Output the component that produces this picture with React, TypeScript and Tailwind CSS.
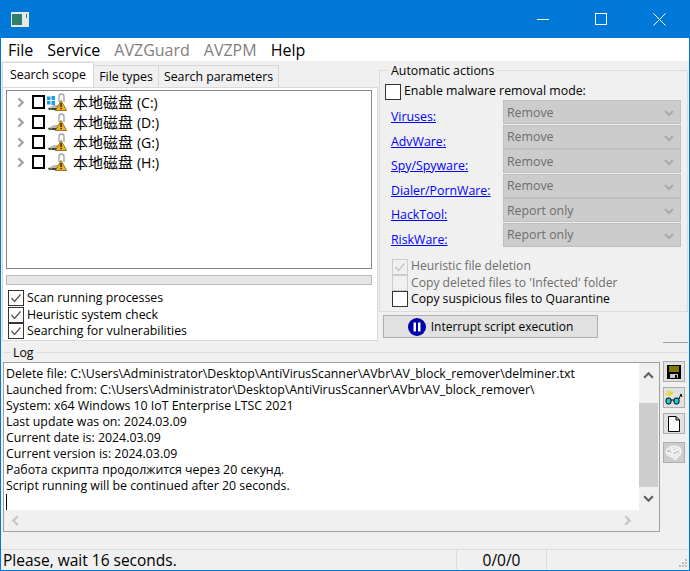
import React from 'react';

const FONT = "font-['Open_Sans','Noto_Sans_CJK_SC',sans-serif]";

const logLines = [
  'Delete file: C:\\Users\\Administrator\\Desktop\\AntiVirusScanner\\AVbr\\AV_block_remover\\delminer.txt',
  'Launched from: C:\\Users\\Administrator\\Desktop\\AntiVirusScanner\\AVbr\\AV_block_remover\\',
  'System: x64 Windows 10 IoT Enterprise LTSC 2021',
  'Last update was on: 2024.03.09',
  'Current date is: 2024.03.09',
  'Current version is: 2024.03.09',
  'Работа скрипта продолжится через 20 секунд.',
  'Script running will be continued after 20 seconds.',
];

const drives = ['C', 'D', 'G', 'H'];

const actions = [
  { label: 'Viruses:', value: 'Remove' },
  { label: 'AdvWare:', value: 'Remove' },
  { label: 'Spy/Spyware:', value: 'Remove' },
  { label: 'Dialer/PornWare:', value: 'Remove' },
  { label: 'HackTool:', value: 'Report only' },
  { label: 'RiskWare:', value: 'Report only' },
];

function Chevron({ dir, color, size = 12 }: { dir: 'up' | 'down' | 'left' | 'right'; color: string; size?: number }) {
  const pts = {
    up: '2,8 6,4 10,8',
    down: '2,4 6,8 10,4',
    left: '8,2 4,6 8,10',
    right: '4,2 8,6 4,10',
  }[dir];
  return (
    <svg width={size} height={size} viewBox="0 0 12 12" className="shrink-0">
      <polyline points={pts} fill="none" stroke={color} strokeWidth="2" />
    </svg>
  );
}

function CheckBox({ checked, disabled }: { checked?: boolean; disabled?: boolean }) {
  return (
    <span
      className={`flex w-4 h-4 shrink-0 items-center justify-center border ${
        disabled ? 'border-[#cccccc] bg-[#f0f0f0]' : 'border-[#333333] bg-white'
      }`}
    >
      {checked && (
        <svg width="12" height="12" viewBox="0 0 12 12">
          <polyline points="1.5,6 4.5,9.5 10.5,2.5" fill="none" stroke={disabled ? '#c4c4c4' : '#555555'} strokeWidth="1.3" />
        </svg>
      )}
    </span>
  );
}

function DriveIcon({ windows }: { windows?: boolean }) {
  return (
    <svg width="20" height="20" viewBox="0 0 20 20" className="shrink-0">
      {windows && (
        <g fill="#1ba1e2">
          <rect x="0" y="4.5" width="3.5" height="3.5" />
          <rect x="4.5" y="4" width="3.5" height="4" />
          <rect x="0" y="9" width="3.5" height="3.5" />
          <rect x="4.5" y="9" width="3.5" height="4" />
        </g>
      )}
      <polygon points="1,16 7,13 11,13 11,16" fill="#b8b8b8" />
      <polygon points="1,16 11,16 11,18 2,18" fill="#404040" />
      <rect x="3" y="16.5" width="2" height="1" fill="#5fcf5f" />
      <path d="M12 10 V4.5 a2.5 2.5 0 0 1 5 0 V10" fill="none" stroke="#a8a8a8" strokeWidth="1.4" />
      <polygon points="14,8.5 19.7,18.5 8.3,18.5" fill="#f2b01e" stroke="#7a5200" strokeWidth="0.7" />
      <rect x="13.4" y="11" width="1.3" height="4" fill="#111111" />
      <rect x="13.4" y="15.8" width="1.3" height="1.4" fill="#111111" />
    </svg>
  );
}

function ToolButton({ children, muted }: { children: React.ReactNode; muted?: boolean }) {
  return (
    <div className={`flex h-[21px] w-[22px] items-center justify-center border border-[#adadad] ${muted ? 'bg-[#cccccc]' : 'bg-[#e1e1e1]'}`}>
      {children}
    </div>
  );
}

function App() {
  return (
    <div className={`${FONT} flex h-[571px] w-[690px] flex-col overflow-hidden border-x border-b border-[#0078d7] bg-[#f0f0f0] text-[12.35px] text-black`}>
      {/* title bar */}
      <div className="flex h-[38px] shrink-0 items-center bg-[#0078d7] pr-[7px]">
        <svg width="18" height="15" viewBox="0 0 18 15" className="ml-[10px]">
          <rect width="18" height="15" fill="#e8e8e8" />
          <rect x="1" y="2" width="10" height="11" fill="#2f7f6f" />
          <rect x="15" y="2" width="1" height="4" fill="#2f7f8f" />
        </svg>
        <div className="flex-1" />
        <div className="flex h-full w-[46px] items-center justify-center">
          <div className="h-px w-3 bg-white" />
        </div>
        <div className="ml-3 flex h-full w-[46px] items-center justify-center">
          <div className="h-3 w-3 border border-white" />
        </div>
        <div className="ml-3 flex h-full w-[46px] items-center justify-center">
          <svg width="13" height="13" viewBox="0 0 13 13">
            <path d="M0.5 0.5 L12.5 12.5 M12.5 0.5 L0.5 12.5" stroke="white" strokeWidth="1" />
          </svg>
        </div>
      </div>

      {/* menu */}
      <div className="flex h-[23px] shrink-0 items-center gap-[14px] bg-white pl-[7px] text-[16px]">
        <span>File</span>
        <span>Service</span>
        <span className="text-[#808080]">AVZGuard</span>
        <span className="text-[#808080]">AVZPM</span>
        <span>Help</span>
      </div>

      <div className="flex h-[284px] shrink-0">
        {/* left side */}
        <div className="flex w-[377px] shrink-0 flex-col pb-[4px] pl-px">
          <div className="flex h-[26px] items-end">
            <div className="mt-[2px] flex h-[25px] w-[92px] items-center justify-center border-x border-t border-[#d9d9d9] bg-white">Search scope</div>
            <div className="flex h-[22px] w-[65px] items-center justify-center border-t border-r border-[#d9d9d9] bg-[#f0f0f0] pt-px">File types</div>
            <div className="flex h-[22px] w-[120px] items-center justify-center border-t border-r border-[#d9d9d9] bg-[#f0f0f0] pt-px">Search parameters</div>
          </div>
          <div className="flex flex-1 flex-col border border-[#d9d9d9] bg-white pl-[3px] pr-[5px] pt-[2px]">
            <div className="h-[179px] border border-[#828790] bg-white pt-px">
              {drives.map((d, i) => (
                <div key={d} className="flex h-[20px] items-center">
                  <span className="ml-[7px]"><Chevron dir="right" color="#a0a0a0" size={13} /></span>
                  <span className="ml-[5px] h-[14px] w-[13px] shrink-0 border-2 border-black" />
                  <span className="ml-[2px]"><DriveIcon windows={i === 0} /></span>
                  <span className="ml-[6px] text-[15px] leading-none text-black">
                    本地磁盘 <span className="text-[14px]">({d}:)</span>
                  </span>
                </div>
              ))}
            </div>
            <div className="mt-[6px] h-[10px] border border-[#bcbcbc] bg-[#e6e6e6]" />
            <div className="mt-[5px] flex flex-col pl-[2px]">
              <label className="flex h-[16.5px] items-center gap-[3px]"><CheckBox checked /><span>Scan running processes</span></label>
              <label className="flex h-[16.5px] items-center gap-[3px]"><CheckBox checked /><span>Heuristic system check</span></label>
              <label className="flex h-[16.5px] items-center gap-[3px]"><CheckBox checked /><span>Searching for vulnerabilities</span></label>
            </div>
          </div>
        </div>

        {/* right side */}
        <div className="flex flex-1 flex-col pl-px pr-px pt-[2px]">
          <fieldset className="h-[249px] border border-[#dcdcdc] pl-[5px] pr-[6px]">
            <legend className="ml-[3px] px-[3px] leading-[15px]">Automatic actions</legend>
            <div className="mt-[5px] flex h-[17px] items-center gap-[3px]">
              <CheckBox />
              <span>Enable malware removal mode:</span>
            </div>
            <div className="flex flex-col">
              {actions.map((a) => (
                <div key={a.label} className="flex h-[24.5px] items-center">
                  <a className="w-[118px] pl-[6px] pt-[10px] text-[#0000ff] underline">{a.label}</a>
                  <div className="flex h-[24px] flex-1 items-center justify-between border border-[#bfbfbf] bg-[#cccccc] pl-[3px] pr-[5px] pt-[2px] text-[#6d6d6d]">
                    <span>{a.value}</span>
                    <Chevron dir="down" color="#aaaaaa" size={12} />
                  </div>
                </div>
              ))}
            </div>
            <div className="flex flex-col pl-[7px] pt-[11px] text-[12.15px]">
              <div className="flex h-[17px] items-center gap-[3px] text-[#6d6d6d]"><CheckBox checked disabled /><span>Heuristic file deletion</span></div>
              <div className="flex h-[16px] items-center gap-[3px] text-[#6d6d6d]"><CheckBox disabled /><span>Copy deleted files to 'Infected' folder</span></div>
              <div className="flex h-[16px] items-center gap-[3px]"><CheckBox /><span>Copy suspicious files to Quarantine</span></div>
            </div>
          </fieldset>
          <button className="ml-[4px] mt-[3px] flex h-[23px] w-[215px] shrink-0 items-center justify-center gap-[5px] border border-[#adadad] bg-[#e1e1e1] text-[12px]">
            <svg width="18" height="18" viewBox="0 0 18 18">
              <circle cx="9" cy="9" r="9" fill="#0000a8" />
              <rect x="5.5" y="4.5" width="2.5" height="9" fill="#ffffff" />
              <rect x="10" y="4.5" width="2.5" height="9" fill="#ffffff" />
            </svg>
            <span>Interrupt script execution</span>
          </button>
          <div className="mt-[4px] h-px w-[25px] shrink-0 self-end bg-[#a0a0a0]" />
        </div>
      </div>

      {/* log */}
      <div className="flex h-[204px] shrink-0 pl-[2px]">
        <fieldset className="h-[186px] w-[657px] shrink-0 border-t border-[#dcdcdc]">
          <legend className="ml-[7px] px-[3px] leading-[15px]">Log</legend>
          <div className="mt-[2px] flex h-[170px] flex-col border border-[#a0a0a0] bg-[#f0f0f0]">
            <div className="flex min-h-0 flex-1">
              <div className="flex-1 bg-white pl-[2px] pt-[3px] leading-[16px]">
                {logLines.map((line) => (
                  <div key={line} className="whitespace-nowrap">{line}</div>
                ))}
                <div className="h-[16px] w-px bg-black" />
              </div>
              <div className="flex w-[20px] flex-col items-center bg-[#f0f0f0] pr-px">
                <div className="flex h-[40px] items-start pt-[6px]"><Chevron dir="up" color="#606060" size={13} /></div>
                <div className="h-[84px] w-full bg-[#cdcdcd]" />
                <div className="flex flex-1 items-center"><Chevron dir="down" color="#606060" size={13} /></div>
              </div>
            </div>
            <div className="flex h-[21px] shrink-0 items-center justify-between pl-[5px] pr-[25px]">
              <Chevron dir="left" color="#c4c4c4" size={13} />
              <Chevron dir="right" color="#c4c4c4" size={13} />
            </div>
          </div>
        </fieldset>
        <div className="mt-[7px] flex flex-1 flex-col self-start border-t border-[#dcdcdc] pl-[3px] pt-[8px]">
          <ToolButton>
            <svg width="16" height="16" viewBox="0 0 16 16">
              <rect x="1" y="1" width="14" height="14" fill="#000000" />
              <rect x="3" y="2" width="10" height="6" fill="#807a00" />
              <rect x="4" y="10" width="8" height="4" fill="#c8c8c8" />
              <rect x="9" y="11" width="2" height="3" fill="#000000" />
            </svg>
          </ToolButton>
          <div className="mt-[5px]">
            <ToolButton>
              <svg width="18" height="16" viewBox="0 0 18 16">
                <path d="M2 1 L5 5 M5 0 L5 5 M0 4 L5 5 M8 2 L5 5" stroke="#e8d800" strokeWidth="1.2" />
                <rect x="1" y="8" width="5" height="6" rx="2" fill="#20c8d8" stroke="#000" />
                <rect x="9" y="8" width="5" height="6" rx="2" fill="#20c8d8" stroke="#000" />
                <path d="M6 10 H9 M14 9 L16 4 L17 7" fill="none" stroke="#000" />
              </svg>
            </ToolButton>
          </div>
          <div className="mt-[5px]">
            <ToolButton>
              <svg width="14" height="16" viewBox="0 0 14 16">
                <path d="M1.5 0.5 H9 L12.5 4 V15.5 H1.5 Z M9 0.5 V4 H12.5" fill="#ffffff" stroke="#000000" />
              </svg>
            </ToolButton>
          </div>
          <div className="mt-[8px]">
            <ToolButton muted>
              <svg width="18" height="16" viewBox="0 0 18 16">
                <path d="M3 3 Q9 -1 15 3 Q18 7 14 11 L10 15 L8 12 Q2 12 1 7 Q1 5 3 3 Z" fill="#e4e4e4" stroke="#ffffff" />
                <path d="M4 5 L9 7 L14 4 M3 8 L8 10 L13 8 M7 3 V6 M11 8 V12" fill="none" stroke="#ffffff" />
                <path d="M2 6 L6 6 M9 9 L13 6" fill="none" stroke="#a8a8a8" />
              </svg>
            </ToolButton>
          </div>
        </div>
      </div>

      {/* status bar */}
      <div className="flex min-h-0 flex-1 items-center border-t border-[#dcdcdc] text-[15.5px] leading-[20px]">
        <div className="w-[455px] pl-[2px]">Please, wait 16 seconds.</div>
        <div className="flex h-full w-[91px] items-center justify-center border-x border-[#dcdcdc]">0/0/0</div>
        <div className="flex h-full flex-1 items-end justify-end pb-[2px] pr-[1px]">
          <svg width="10" height="10" viewBox="0 0 10 10">
            <g fill="#bdbdbd">
              <rect x="7" y="1" width="2" height="2" />
              <rect x="4" y="4" width="2" height="2" />
              <rect x="7" y="4" width="2" height="2" />
              <rect x="1" y="7" width="2" height="2" />
              <rect x="4" y="7" width="2" height="2" />
              <rect x="7" y="7" width="2" height="2" />
            </g>
          </svg>
        </div>
      </div>
    </div>
  );
}

export default App;
